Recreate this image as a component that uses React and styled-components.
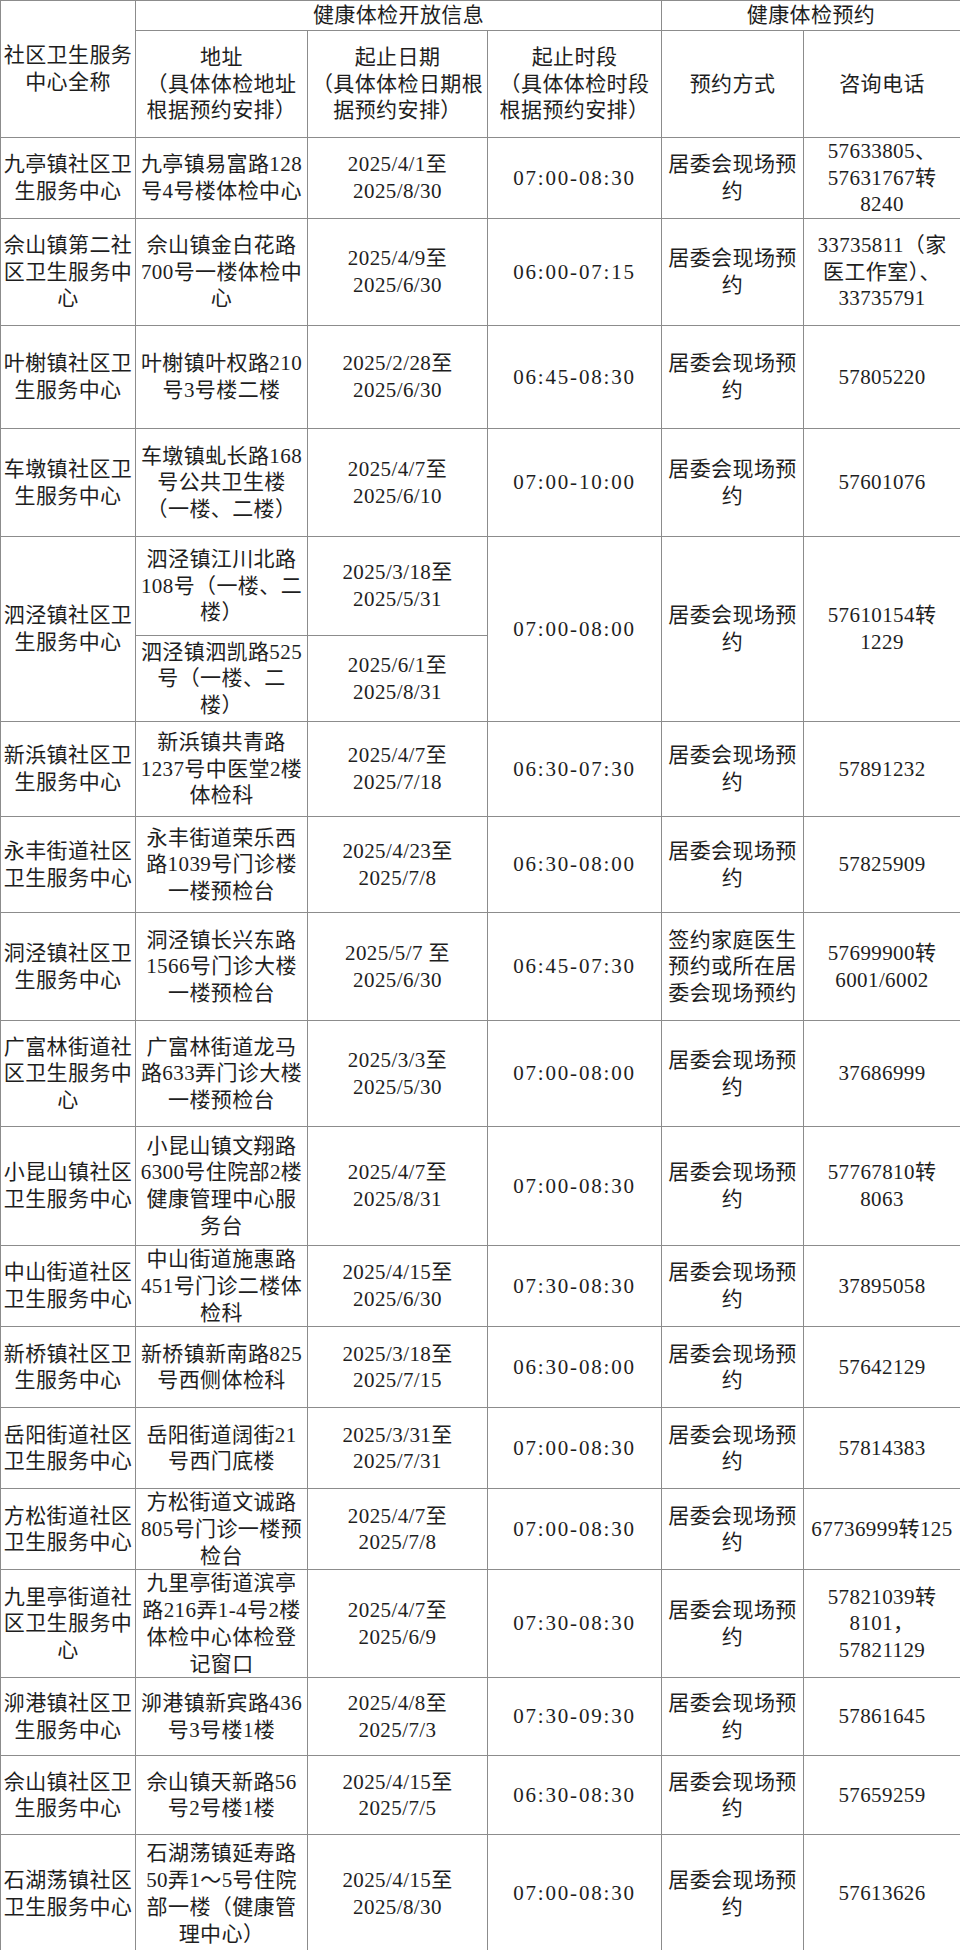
import React from 'react'
import styled, { createGlobalStyle } from 'styled-components'

const GlobalStyle = createGlobalStyle`
    html, body {
        margin: 0;
        padding: 0;
        background: #fff;
    }
    body {
        font-family: "Liberation Serif", "Noto Sans CJK SC", serif;
        color: #222;
    }
`

const Table = styled.table`
    width: 960px;
    border-collapse: collapse;
    table-layout: fixed;
    font-family: "Liberation Serif", "Noto Sans CJK SC", serif;
`
const Row = styled.tr`
    height: ${p => p.$h}px;
`
const Cell = styled.td`
    border: 1px solid #8c8c8c;
    padding: 0 2px;
    text-align: center;
    vertical-align: middle;
    white-space: pre;
    font-size: 21px;
    line-height: 26.7px;
    font-weight: 400;
    color: #1e1e1e;
    letter-spacing: ${p => (p.$spaced ? '1.8px' : '0.4px')};
`
const HeadCell = styled(Cell).attrs({ as: 'th' })`
    font-weight: 400;
`

const widths = [135, 172, 180, 174, 142, 157]

const rows = [
    { h: 80, name: '九亭镇社区卫\n生服务中心', addr: '九亭镇易富路128\n号4号楼体检中心', date: '2025/4/1至\n2025/8/30', time: '07:00-08:30', way: '居委会现场预\n约', tel: '57633805、\n57631767转\n8240' },
    { h: 107, name: '佘山镇第二社\n区卫生服务中\n心', addr: '佘山镇金白花路\n700号一楼体检中\n心', date: '2025/4/9至\n2025/6/30', time: '06:00-07:15', way: '居委会现场预\n约', tel: '33735811（家\n医工作室）、\n33735791' },
    { h: 103, name: '叶榭镇社区卫\n生服务中心', addr: '叶榭镇叶权路210\n号3号楼二楼', date: '2025/2/28至\n2025/6/30', time: '06:45-08:30', way: '居委会现场预\n约', tel: '57805220' },
    { h: 108, name: '车墩镇社区卫\n生服务中心', addr: '车墩镇虬长路168\n号公共卫生楼\n（一楼、二楼）', date: '2025/4/7至\n2025/6/10', time: '07:00-10:00', way: '居委会现场预\n约', tel: '57601076' },
    {
        name: '泗泾镇社区卫\n生服务中心', time: '07:00-08:00', way: '居委会现场预\n约', tel: '57610154转\n1229',
        sub: [
            { h: 99, addr: '泗泾镇江川北路\n108号（一楼、二\n楼）', date: '2025/3/18至\n2025/5/31' },
            { h: 86, addr: '泗泾镇泗凯路525\n号（一楼、二\n楼）', date: '2025/6/1至\n2025/8/31' },
        ],
    },
    { h: 95, name: '新浜镇社区卫\n生服务中心', addr: '新浜镇共青路\n1237号中医堂2楼\n体检科', date: '2025/4/7至\n2025/7/18', time: '06:30-07:30', way: '居委会现场预\n约', tel: '57891232' },
    { h: 96, name: '永丰街道社区\n卫生服务中心', addr: '永丰街道荣乐西\n路1039号门诊楼\n一楼预检台', date: '2025/4/23至\n2025/7/8', time: '06:30-08:00', way: '居委会现场预\n约', tel: '57825909' },
    { h: 108, name: '洞泾镇社区卫\n生服务中心', addr: '洞泾镇长兴东路\n1566号门诊大楼\n一楼预检台', date: '2025/5/7 至\n2025/6/30', time: '06:45-07:30', way: '签约家庭医生\n预约或所在居\n委会现场预约', tel: '57699900转\n6001/6002' },
    { h: 106, name: '广富林街道社\n区卫生服务中\n心', addr: '广富林街道龙马\n路633弄门诊大楼\n一楼预检台', date: '2025/3/3至\n2025/5/30', time: '07:00-08:00', way: '居委会现场预\n约', tel: '37686999' },
    { h: 119, name: '小昆山镇社区\n卫生服务中心', addr: '小昆山镇文翔路\n6300号住院部2楼\n健康管理中心服\n务台', date: '2025/4/7至\n2025/8/31', time: '07:00-08:30', way: '居委会现场预\n约', tel: '57767810转\n8063' },
    { h: 80, name: '中山街道社区\n卫生服务中心', addr: '中山街道施惠路\n451号门诊二楼体\n检科', date: '2025/4/15至\n2025/6/30', time: '07:30-08:30', way: '居委会现场预\n约', tel: '37895058' },
    { h: 81, name: '新桥镇社区卫\n生服务中心', addr: '新桥镇新南路825\n号西侧体检科', date: '2025/3/18至\n2025/7/15', time: '06:30-08:00', way: '居委会现场预\n约', tel: '57642129' },
    { h: 81, name: '岳阳街道社区\n卫生服务中心', addr: '岳阳街道阔街21\n号西门底楼', date: '2025/3/31至\n2025/7/31', time: '07:00-08:30', way: '居委会现场预\n约', tel: '57814383' },
    { h: 79, name: '方松街道社区\n卫生服务中心', addr: '方松街道文诚路\n805号门诊一楼预\n检台', date: '2025/4/7至\n2025/7/8', time: '07:00-08:30', way: '居委会现场预\n约', tel: '67736999转125' },
    { h: 108, name: '九里亭街道社\n区卫生服务中\n心', addr: '九里亭街道滨亭\n路216弄1-4号2楼\n体检中心体检登\n记窗口', date: '2025/4/7至\n2025/6/9', time: '07:30-08:30', way: '居委会现场预\n约', tel: '57821039转\n8101，\n57821129' },
    { h: 78, name: '泖港镇社区卫\n生服务中心', addr: '泖港镇新宾路436\n号3号楼1楼', date: '2025/4/8至\n2025/7/3', time: '07:30-09:30', way: '居委会现场预\n约', tel: '57861645' },
    { h: 79, name: '佘山镇社区卫\n生服务中心', addr: '佘山镇天新路56\n号2号楼1楼', date: '2025/4/15至\n2025/7/5', time: '06:30-08:30', way: '居委会现场预\n约', tel: '57659259' },
    { h: 118, name: '石湖荡镇社区\n卫生服务中心', addr: '石湖荡镇延寿路\n50弄1～5号住院\n部一楼（健康管\n理中心）', date: '2025/4/15至\n2025/8/30', time: '07:00-08:30', way: '居委会现场预\n约', tel: '57613626' },
]

function CenterRows({ row }) {
    if (row.sub) {
        const [first, ...rest] = row.sub
        const span = row.sub.length
        return (
            <>
                <Row $h={first.h}>
                    <Cell rowSpan={span}>{row.name}</Cell>
                    <Cell>{first.addr}</Cell>
                    <Cell>{first.date}</Cell>
                    <Cell rowSpan={span} $spaced>{row.time}</Cell>
                    <Cell rowSpan={span}>{row.way}</Cell>
                    <Cell rowSpan={span}>{row.tel}</Cell>
                </Row>
                {rest.map((s, i) => (
                    <Row key={i} $h={s.h}>
                        <Cell>{s.addr}</Cell>
                        <Cell>{s.date}</Cell>
                    </Row>
                ))}
            </>
        )
    }
    return (
        <Row $h={row.h}>
            <Cell>{row.name}</Cell>
            <Cell>{row.addr}</Cell>
            <Cell>{row.date}</Cell>
            <Cell $spaced>{row.time}</Cell>
            <Cell>{row.way}</Cell>
            <Cell>{row.tel}</Cell>
        </Row>
    )
}

export default function App() {
    return (
        <>
            <GlobalStyle />
            <Table>
                <colgroup>
                    {widths.map((w, i) => <col key={i} style={{ width: w }} />)}
                </colgroup>
                <thead>
                    <Row $h={30}>
                        <HeadCell rowSpan={2}>{'社区卫生服务\n中心全称'}</HeadCell>
                        <HeadCell colSpan={3}>健康体检开放信息</HeadCell>
                        <HeadCell colSpan={2}>健康体检预约</HeadCell>
                    </Row>
                    <Row $h={107}>
                        <HeadCell>{'地址\n（具体体检地址\n根据预约安排）'}</HeadCell>
                        <HeadCell>{'起止日期\n（具体体检日期根\n据预约安排）'}</HeadCell>
                        <HeadCell>{'起止时段\n（具体体检时段\n根据预约安排）'}</HeadCell>
                        <HeadCell>预约方式</HeadCell>
                        <HeadCell>咨询电话</HeadCell>
                    </Row>
                </thead>
                <tbody>
                    {rows.map((r, i) => <CenterRows key={i} row={r} />)}
                </tbody>
            </Table>
        </>
    )
}
